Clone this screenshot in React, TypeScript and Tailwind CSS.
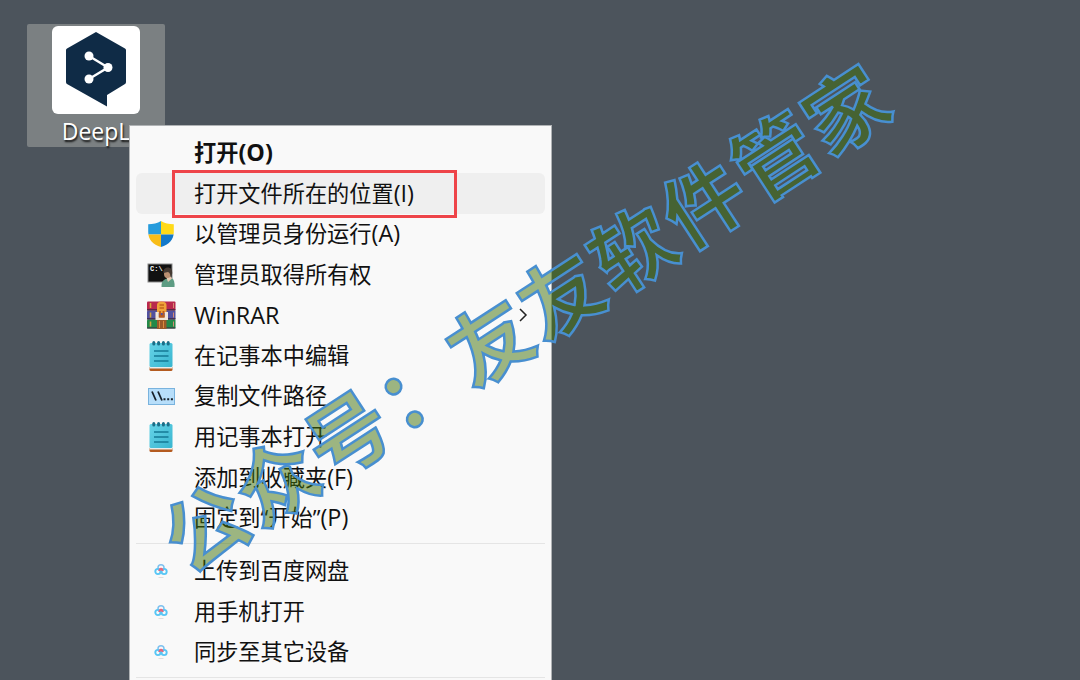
import type { ReactNode } from "react";

interface MenuItem {
  label: string;
  latin?: string;
  icon?: ReactNode;
  bold?: boolean;
  active?: boolean;
  submenu?: boolean;
}

const ShieldIcon = () => (
  <svg width="28" height="28" viewBox="0 0 28 28">
    <defs>
      <clipPath id="shield">
        <path d="M14 1C10.500 3.600 6 4.200 1.200 4.300V12C1.200 19.500 6 24.500 14 27C22 24.500 26.800 19.500 26.800 12V4.300C22 4.200 17.500 3.600 14 1Z" />
      </clipPath>
    </defs>
    <g clipPath="url(#shield)">
      <path fill="#259bdc" d="M0 0h14v14.500H0z" />
      <path fill="#ffda18" d="M14 0h14v14.500H14z" />
      <path fill="#f8bd18" d="M0 14.500h14V28H0z" />
      <path fill="#1479ca" d="M14 14.500h14V28H14z" />
    </g>
  </svg>
);

const ConsoleIcon = () => (
  <svg width="28" height="26" viewBox="0 0 28 26">
    <rect x="1" y="2" width="24" height="18" fill="#111" stroke="#8b8b8b" />
    <text x="3" y="9" fill="#fff" fontSize="7" fontWeight="700" fontFamily="Liberation Mono, monospace">C:\</text>
    <path d="M14.500 25q-.5-6 4-8l6.500-.5q3 1.500 2.500 8.500z" fill="#5d9c83" />
    <path d="M19 14.500l2 5.500 4-3.500-1.500-3z" fill="#e3c9b2" />
    <ellipse cx="20.500" cy="11.800" rx="3.500" ry="4.300" fill="#b98f72" />
    <path d="M16.500 11c-.5-4 2-5.500 4.500-5.500s4.500 2 4.200 6l-1.700 4c0-3-.6-4.500-2.500-5.500z" fill="#453a33" />
  </svg>
);

const RarIcon = () => (
  <svg width="30" height="28" viewBox="0 0 30 28">
    <rect x="1" y=".5" width="28.500" height="9" rx="1" fill="#b9284d" />
    <rect x="1" y="9.500" width="28.500" height="9" rx="1" fill="#51509f" />
    <rect x="1" y="18.500" width="28.500" height="9" rx="1" fill="#23894a" />
    <path d="M1 8.800h28.500M1 17.800h28.500M1 27h28.500" stroke="#40243f" strokeWidth="1.200" />
    <path d="M4.500 2v5M4.500 11.500v5M4.500 20.500v5" stroke="#d5a63d" strokeWidth="1.600" />
    <path d="M27.500 2v5M27.500 11.500v5M27.500 20.500v5" stroke="#d88b72" />
    <rect x="11" y="14" width="9.500" height="14" fill="#9a5a29" />
    <path d="M11 12V4q0-3.500 4.700-3.500T20.500 4v8z" fill="#efa23a" />
    <path d="M13.500 4h4.500M13.500 7h4.500" stroke="#c3651b" strokeWidth="1.300" />
    <path d="M9.500 11h3.200v5.500h6V11H22v8H9.500z" fill="#f1e5d8" />
    <path d="M14 10v5.500h3.500V10" fill="none" stroke="#ba5a20" strokeWidth="1.800" />
    <path d="M13.500 20v7M17.500 20v7" stroke="#dc8c3d" />
  </svg>
);

const NotepadIcon = () => (
  <svg width="24" height="32" viewBox="0 0 24 32">
    <defs>
      <linearGradient id="note" x1="0" y1="0" x2="1" y2="1">
        <stop stopColor="#67d4e8" />
        <stop offset="1" stopColor="#38b5cf" />
      </linearGradient>
    </defs>
    <path d="M.5 27h23v2.500q0 1.500-1.500 1.500H2Q.5 31 .5 29.500z" fill="#b45b20" />
    <path d="M.5 26h23v2.500H.5z" fill="#e9edeb" />
    <rect x=".5" y="3" width="23" height="24" rx="1.500" fill="url(#note)" />
    <path d="M4.800 2.500v1.500M9.600 2.500v1.500M14.400 2.500v1.500M19.200 2.500v1.500" stroke="#1b6d87" strokeWidth="3" strokeLinecap="round" />
    <path d="M5 11h14.500M5 16h14.500M5 21h14.500" stroke="#147995" strokeWidth="1.700" />
  </svg>
);

const PathIcon = () => (
  <svg width="27" height="17" viewBox="0 0 27 17">
    <rect x=".5" y=".5" width="26" height="16" fill="#b7defa" stroke="#79b3de" />
    <path d="M4 3.500l4 9M10 3.500l4 9" stroke="#17202a" strokeWidth="1.800" />
    <path d="M15.500 11.300h2M19.200 11.300h2M22.900 11.300h2" stroke="#17202a" strokeWidth="2" />
  </svg>
);

const CloudIcon = () => (
  <svg width="14" height="16" viewBox="0 0 14 16" fill="none">
    <circle cx="7" cy="4.800" r="3" stroke="#7fc0ee" strokeWidth="1.500" />
    <circle cx="3.900" cy="8.500" r="2.600" stroke="#58c6f5" strokeWidth="1.900" />
    <circle cx="10.100" cy="8.500" r="2.600" stroke="#58c6f5" strokeWidth="1.900" />
    <path d="M5.500 8Q5.600 5.800 7 5.800T8.500 8" stroke="#ec6478" strokeWidth="2" />
    <path d="M4.500 14.500h5" stroke="#dedede" />
  </svg>
);

const mainItems: MenuItem[] = [
  { label: "打开", latin: "(O)", bold: true },
  { label: "打开文件所在的位置", latin: "(I)", active: true },
  { label: "以管理员身份运行", latin: "(A)", icon: <ShieldIcon /> },
  { label: "管理员取得所有权", icon: <ConsoleIcon /> },
  { label: "", latin: "WinRAR", icon: <RarIcon />, submenu: true },
  { label: "在记事本中编辑", icon: <NotepadIcon /> },
  { label: "复制文件路径", icon: <PathIcon /> },
  { label: "用记事本打开", icon: <NotepadIcon /> },
  { label: "添加到收藏夹", latin: "(F)" },
  { label: "固定到“开始”", latin: "(P)" },
];

const cloudItems: MenuItem[] = [
  { label: "上传到百度网盘", icon: <CloudIcon /> },
  { label: "用手机打开", icon: <CloudIcon /> },
  { label: "同步至其它设备", icon: <CloudIcon /> },
];

const MenuRow = ({ item }: { item: MenuItem }) => (
  <li className={`mx-1.5 flex h-[40.55px] items-center rounded-md ${item.active ? "bg-[#efefef]" : ""}`}>
    <span className="flex w-[50px] shrink-0 items-center justify-center">{item.icon}</span>
    <span className={`ml-2 whitespace-nowrap ${item.bold ? "font-bold" : ""}`}>
      {item.label}
      {item.latin && <span className="text-[23.4px]">{item.latin}</span>}
    </span>
    {item.submenu && (
      <svg className="mr-[17px] ml-auto" width="10" height="14" viewBox="0 0 10 14" fill="none" stroke="#222" strokeWidth="1.500">
        <path d="M2 1l6 6-6 6" />
      </svg>
    )}
  </li>
);

const DesktopIcon = () => (
  <div className="absolute top-6 left-[27px] flex h-[123px] w-[138px] flex-col items-center rounded-xs bg-[#7b8082] pt-0.5">
    <div className="flex h-[88px] w-[88px] shrink-0 items-center justify-center rounded-md bg-white">
      <svg width="62" height="76" viewBox="0 0 62 76">
        <path d="M31 0L60 16.500Q61 17 61 18V50Q61 51.500 60 52L42 63V74.500L2 52Q1 51.500 1 50V18Q1 17 2 16.500Z" fill="#0f2b46" />
        <path d="M24 24L43 35.500L24 47" fill="none" stroke="#fff" strokeWidth="2.400" />
        <circle cx="24" cy="24" r="4.500" fill="#fff" />
        <circle cx="43" cy="35.500" r="4.500" fill="#fff" />
        <circle cx="24" cy="47" r="4.500" fill="#fff" />
      </svg>
    </div>
    <span className="mt-px text-[23px] leading-8 text-white [text-shadow:1px_2px_2px_#111]">DeepL</span>
  </div>
);

const Watermark = () => (
  <svg className="pointer-events-none absolute inset-0" width="1080" height="680">
    <g
      transform="translate(206 528) rotate(-33.05)"
      fontFamily="'Noto Sans CJK SC', sans-serif"
      fontSize="82"
      fontWeight="700"
      fill="#40720a"
      fillOpacity=".5"
      stroke="#488fd0"
      strokeWidth="2.500"
    >
      <text x="-41" y="30" letterSpacing="2.900">公众号：友友软件管家</text>
    </g>
  </svg>
);

export default function App() {
  return (
    <main className="relative h-[680px] w-[1080px] overflow-hidden bg-[#4c545c] font-['Open_Sans','Noto_Sans_CJK_SC',sans-serif]">
      <DesktopIcon />
      <div className="absolute top-[125px] left-[129px] h-[570px] w-[423px] border border-[#b0b3b5] bg-[#f9f9f9] pt-[6.6px] text-[22.2px] leading-8 text-[#111]">
        <ul>
          {mainItems.map((item) => (
            <MenuRow key={item.label} item={item} />
          ))}
        </ul>
        <hr className="mx-1.5 mt-[5px] mb-[7px] border-[#e5e5e5]" />
        <ul>
          {cloudItems.map((item) => (
            <MenuRow key={item.label} item={item} />
          ))}
        </ul>
        <hr className="mx-1.5 mt-1 border-[#e5e5e5]" />
      </div>
      <div className="absolute top-[170px] left-[172px] h-12 w-[285px] border-3 border-[#ee4449]" />
      <Watermark />
    </main>
  );
}
